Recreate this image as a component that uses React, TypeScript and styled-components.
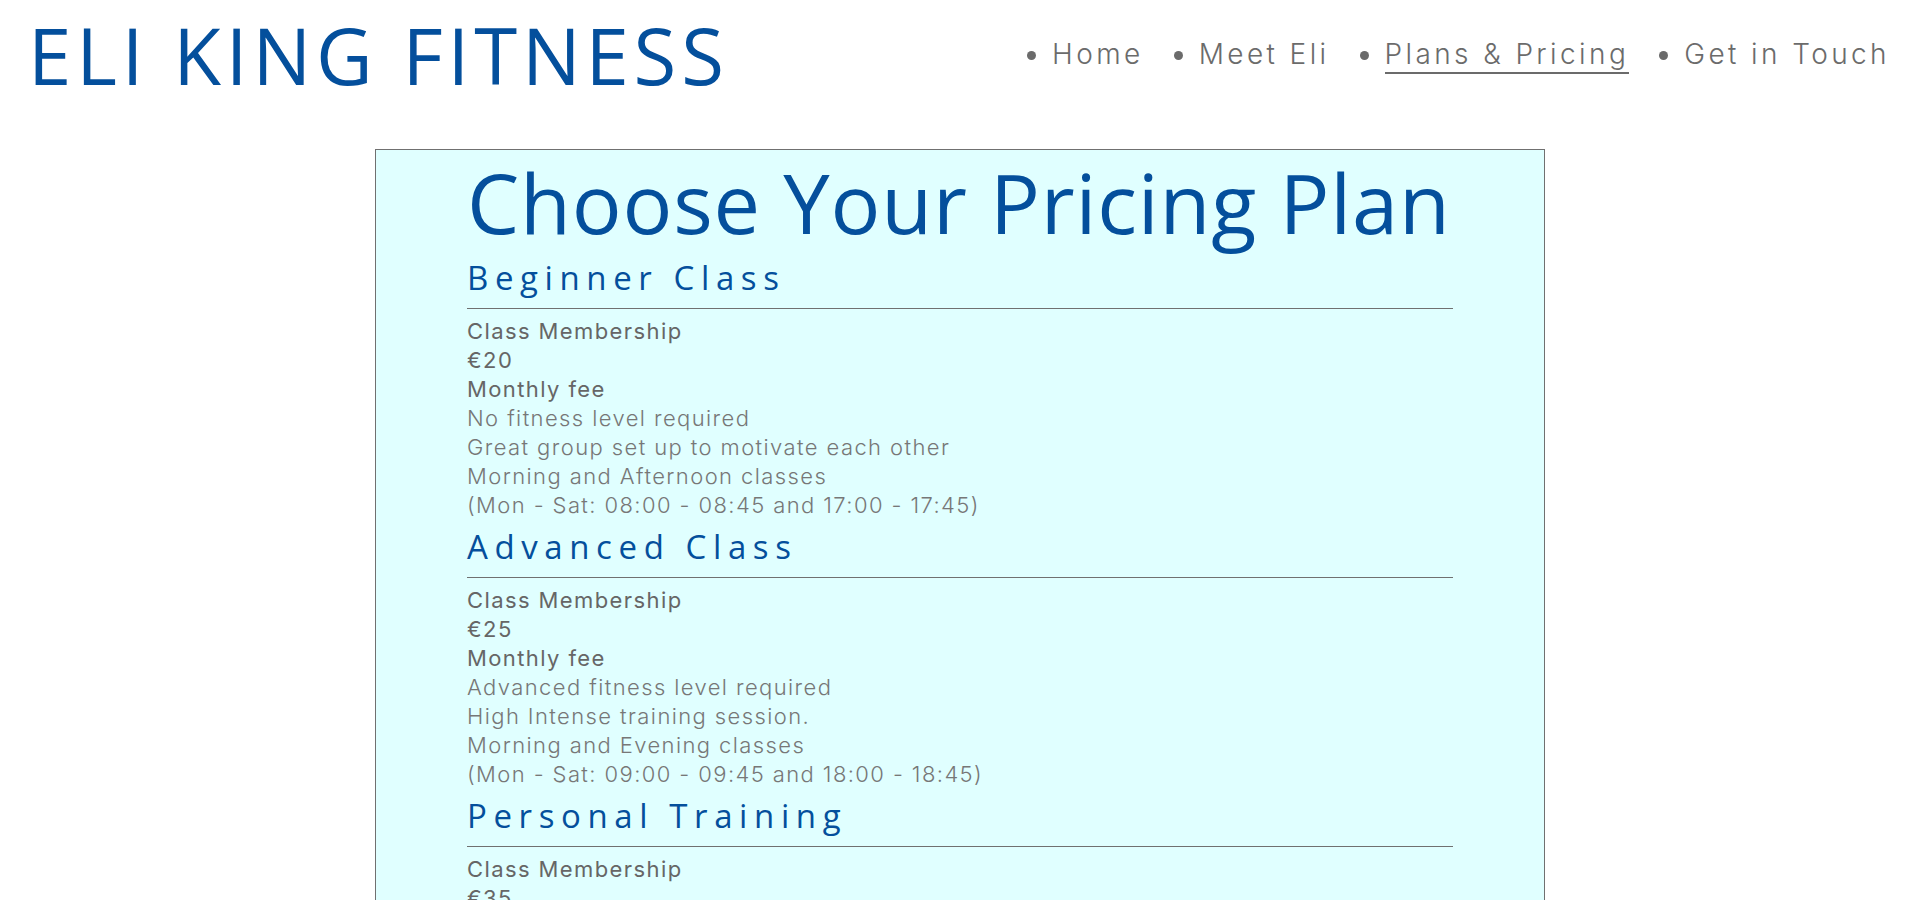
import React from "react";
import styled, { createGlobalStyle } from "styled-components";

const GlobalStyle = createGlobalStyle`
  html, body {
    margin: 0;
    padding: 0;
    background: #ffffff;
  }
  body {
    font-family: "Inter", "Liberation Sans", sans-serif;
    -webkit-font-smoothing: antialiased;
  }
  * { box-sizing: border-box; }
`;

const BLUE = "#044f9c";
const GREY = "#6b6b6b";

const Header = styled.header`
  display: flex;
  justify-content: space-between;
  align-items: flex-start;
  height: 149px;
  padding: 0 30px 0 28px;
`;

const Brand = styled.div`
  margin-top: 16px;
  font-family: "Open Sans", "Liberation Sans", sans-serif;
  font-size: 78px;
  line-height: 78px;
  font-weight: 400;
  letter-spacing: 4.8px;
  color: ${BLUE};
  white-space: nowrap;
`;

const Nav = styled.nav`
  margin-top: 36px;
`;

const NavList = styled.ul`
  display: flex;
  gap: 30px;
  list-style: none;
  margin: 0;
  padding: 0;
`;

const NavItem = styled.li`
  display: flex;
  align-items: center;
  gap: 16px;

  &::before {
    content: "";
    width: 9px;
    height: 9px;
    border-radius: 50%;
    background: ${GREY};
    flex: none;
    margin-top: 1px;
  }
`;

const NavLink = styled.a<{ $active?: boolean }>`
  font-family: "Inter", "Liberation Sans", sans-serif;
  font-weight: 300;
  font-size: 28px;
  line-height: 36px;
  letter-spacing: 3.4px;
  color: ${GREY};
  text-decoration: none;
  border-bottom: 2px solid ${(p) => (p.$active ? GREY : "transparent")};
  white-space: nowrap;
`;

const Panel = styled.main`
  width: 1170px;
  margin: 0 auto;
  background: #e0ffff;
  border: 1px solid #707070;
  padding: 10px 91px 40px;
`;

const Title = styled.h1`
  margin: 0 0 11px;
  font-family: "Open Sans", "Liberation Sans", sans-serif;
  font-weight: 400;
  font-size: 83px;
  line-height: 84px;
  letter-spacing: 0.8px;
  color: ${BLUE};
`;

const PlanHeading = styled.h2`
  margin: 4px 0 0;
  padding-bottom: 8px;
  border-bottom: 1px solid #707070;
  font-family: "Open Sans", "Liberation Sans", sans-serif;
  font-weight: 400;
  font-size: 33px;
  line-height: 45px;
  letter-spacing: 0.2em;
  color: ${BLUE};
`;

const PlanBody = styled.div`
  margin-top: 8px;
  display: flex;
  flex-direction: column;
`;

const Line = styled.div<{ $strong?: boolean }>`
  font-family: "Inter", "Liberation Sans", sans-serif;
  font-size: 22px;
  line-height: 29px;
  font-weight: ${(p) => (p.$strong ? 400 : 300)};
  color: ${(p) => (p.$strong ? "#666666" : "#777777")};
  letter-spacing: ${(p) => (p.$strong ? "1.4px" : "1.4px")};
  white-space: nowrap;
`;

type Plan = {
  name: string;
  label: string;
  price: string;
  period: string;
  details: string[];
};

const plans: Plan[] = [
  {
    name: "Beginner Class",
    label: "Class Membership",
    price: "€20",
    period: "Monthly fee",
    details: [
      "No fitness level required",
      "Great group set up to motivate each other",
      "Morning and Afternoon classes",
      "(Mon - Sat: 08:00 - 08:45 and 17:00 - 17:45)",
    ],
  },
  {
    name: "Advanced Class",
    label: "Class Membership",
    price: "€25",
    period: "Monthly fee",
    details: [
      "Advanced fitness level required",
      "High Intense training session.",
      "Morning and Evening classes",
      "(Mon - Sat: 09:00 - 09:45 and 18:00 - 18:45)",
    ],
  },
  {
    name: "Personal Training",
    label: "Class Membership",
    price: "€35",
    period: "Per session",
    details: [
      "One to one training with Eli",
      "Tailored plan to reach your personal goals",
      "Flexible times to suit your schedule",
      "(Mon - Sat: by appointment)",
    ],
  },
];

const navItems = [
  { label: "Home", active: false },
  { label: "Meet Eli", active: false },
  { label: "Plans & Pricing", active: true },
  { label: "Get in Touch", active: false },
];

export default function App() {
  return (
    <>
      <GlobalStyle />
      <Header>
        <Brand>ELI KING FITNESS</Brand>
        <Nav>
          <NavList>
            {navItems.map((item) => (
              <NavItem key={item.label}>
                <NavLink href="#" $active={item.active}>
                  {item.label}
                </NavLink>
              </NavItem>
            ))}
          </NavList>
        </Nav>
      </Header>
      <Panel>
        <Title>Choose Your Pricing Plan</Title>
        {plans.map((plan) => (
          <section key={plan.name}>
            <PlanHeading>{plan.name}</PlanHeading>
            <PlanBody>
              <Line $strong>{plan.label}</Line>
              <Line $strong>{plan.price}</Line>
              <Line $strong>{plan.period}</Line>
              {plan.details.map((d) => (
                <Line key={d}>{d}</Line>
              ))}
            </PlanBody>
          </section>
        ))}
      </Panel>
    </>
  );
}
